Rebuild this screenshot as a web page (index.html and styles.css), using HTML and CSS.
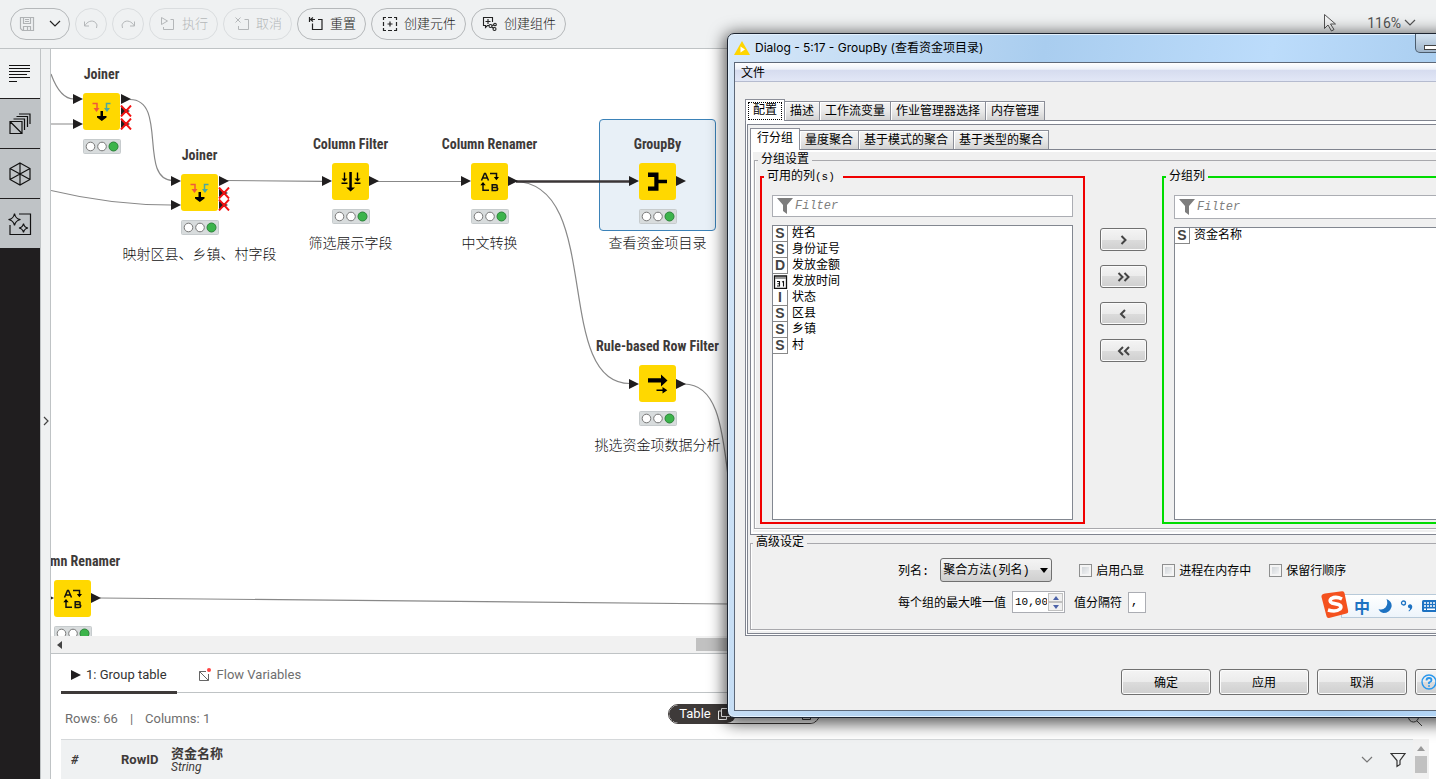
FILE: index.html
```html
<!DOCTYPE html>
<html lang="zh-CN">
<head>
<meta charset="utf-8">
<title>GroupBy</title>
<link rel="stylesheet" href="styles.css">
</head>
<body>
<svg class="defs" aria-hidden="true">
  <defs>
    <symbol id="i-joiner" viewBox="0 0 37 37">
      <path d="M9.500 10.500h4.500v6" fill="none" stroke="#ee5a3a" stroke-width="1.500"/><path d="M10.500 15h6l-3 4z" fill="#ee5a3a"/>
      <path d="M27.500 10.500h-4v6" fill="none" stroke="#4ba8a0" stroke-width="1.500"/><path d="M21 15h6l-3 4z" fill="#4ba8a0"/>
      <path d="M17.500 18h2.500v5h3.500v1.500l-4.700 3.500-4.800-3.500V23h3.500z"/>
    </symbol>
    <symbol id="i-filter" viewBox="0 0 37 37">
      <path d="M17.300 9h2.500v15.500h3.200l-4.400 4-4.400-4h3.100zM11.800 9.500h1.400v6h2.300l-3 3-3-3h2.300zM24.800 9.500h1.400v6h2.300l-3 3-3-3h2.300zM9.500 19.500h6v1.500h-6zM22.500 19.500h6v1.500h-6z"/>
    </symbol>
    <symbol id="i-rename" viewBox="0 0 37 37">
      <g fill="none" stroke="#111" stroke-width="1.500"><path d="M10.500 17.500l3-7h1l3 7M11.800 15h4.500"/><path d="M19 10.500h6.500v4"/><path d="M12 21v6.300h6"/><path d="M21.200 21.700h3.500q1.500 0 1.500 1.300t-1.500 1.500q2 0 2 1.500t-1.800 1.600h-3.700zM21.200 24.500h3.500"/></g>
      <path d="M22.800 14h5.200l-2.600 3.300zM9.300 22.300h5.400L12 19z"/>
    </symbol>
    <symbol id="i-group" viewBox="0 0 37 37"><path d="M9 9.500h10.500v7.200H28v3.600h-8.500v7.500H9v-4.200h6.300V14H9z"/></symbol>
    <symbol id="i-rowfilter" viewBox="0 0 37 37"><path d="M9 13.300h13V9.500l6.500 6-6.500 6v-3.900H9zM17.500 24.500h6V22l4.800 3.200-4.800 3.300V26h-6z"/></symbol>
    <symbol id="i-funnel" viewBox="0 0 16 16"><path d="M0 0h16l-6 7v9l-4-3V7z" fill="#7d7d7d"/></symbol>
    <symbol id="i-caret" viewBox="0 0 12 8"><path d="M1 1l5 5 5-5" fill="none" stroke="currentColor" stroke-width="1.200"/></symbol>
    <symbol id="i-lights" viewBox="0 0 38 15">
      <rect x=".5" y=".5" width="37" height="14" rx="1" fill="#d8dcdd" stroke="#c6cbcd"/>
      <circle cx="7.500" cy="7.500" r="4.300" fill="#fff" stroke="#777"/><circle cx="19" cy="7.500" r="4.300" fill="#fff" stroke="#777"/><circle cx="30.500" cy="7.500" r="4.500" fill="#3cb44b" stroke="#2b8239"/>
    </symbol>
    <symbol id="i-port" viewBox="0 0 10 10"><path d="M0 0l10 5-10 5z" fill="#201e1f"/></symbol>
    <symbol id="i-off" viewBox="0 0 12 12"><path d="M1 2l9 4-9 4z" fill="#201e1f"/><path d="M1 .5l10 11M11 .5l-10 11" stroke="#f31111" stroke-width="1.900"/></symbol>
  </defs>
</svg>

<div class="app">
  <header class="toolbar">
    <div class="pill save-group">
      <button class="bare faded" aria-label="保存"><svg width="16" height="16" viewBox="0 0 16 16" fill="none" stroke="currentColor" stroke-width="1.200"><path d="M1.500 1.500h13v13h-11l-2-2zM4.500 1.500v6h7v-6M4.500 14.500v-4h7v4M8.500 11v3M6 3.500h4M6 5.500h4"/></svg></button>
      <span class="split"></span>
      <button class="bare" aria-label="更多"><svg width="12" height="8"><use href="#i-caret"/></svg></button>
    </div>
    <button class="pill round disabled" aria-label="撤销"><svg width="16" height="12" viewBox="0 0 16 12" fill="none" stroke="currentColor"><path d="M1.500 3.500v4.500h4.500M1.700 8C4 3.500 9 1.500 12.500 4.500q2.500 2 1 5.500"/></svg></button>
    <button class="pill round disabled" aria-label="重做"><svg width="16" height="12" viewBox="0 0 16 12" fill="none" stroke="currentColor"><path d="M14.500 3.500v4.500h-4.500M14.300 8C12 3.500 7 1.500 3.500 4.500q-2.500 2-1 5.500"/></svg></button>
    <button class="pill disabled"><svg width="16" height="16" viewBox="0 0 16 16" fill="none" stroke="currentColor"><path d="M1.500 1.500l6 3.500-6 3.500zM10.500 3.500h3v10h-10v-2.500"/></svg>执行</button>
    <button class="pill disabled"><svg width="16" height="16" viewBox="0 0 16 16" fill="none" stroke="currentColor"><path d="M1.500 1.500l5 5M6.500 1.500l-5 5M10.500 3.500h4v10h-10v-3.500"/></svg>取消</button>
    <button class="pill"><svg width="16" height="16" viewBox="0 0 16 16" fill="none" stroke="currentColor" stroke-width="1.200"><path d="M1.500 1v5M7 3.500H2.500M5 1.500l-2.500 2L5 5.500M10 3.500h4v10H4.500v-6"/></svg>重置</button>
    <button class="pill"><svg width="16" height="16" viewBox="0 0 16 16" fill="none" stroke="currentColor" stroke-width="1.200"><path d="M1.500 4V1.500H4M6 1.500h4M12 1.500h2.500V4M14.500 6v4M14.500 12v2.500H12M10 14.500H6M4 14.500H1.500V12M1.500 10V6M8 5.500v5M5.500 8h5"/></svg>创建元件</button>
    <button class="pill"><svg width="16" height="16" viewBox="0 0 16 16" fill="none" stroke="currentColor" stroke-width="1.100"><path d="M7 9.500H5.500l-2 2v-2h-2v-8h9V6M6 3v5M3.500 5.500h5"/><circle cx="8.500" cy="10" r="1.500"/><circle cx="13" cy="8.500" r="1.300"/><circle cx="12.500" cy="13" r="1.500"/><path d="M10 9.500l2-.7M9.700 11l2 1.300"/></svg>创建组件</button>
    <div class="view-tools">
      <svg width="16" height="20" viewBox="0 0 16 20" fill="#f4f5f6" stroke="#555"><path d="M1.500 1.500v14l3.500-3.500 3.500 6 2.500-1.500-3.500-5.500h5z"/></svg>
      <button class="bare zoom">116%<svg width="12" height="8"><use href="#i-caret"/></svg></button>
    </div>
  </header>

  <div class="body">
    <nav class="rail">
      <button class="rail-item active" aria-label="描述"><svg width="22" height="18" viewBox="0 0 22 18" stroke="#111" stroke-width="1.100"><path d="M0 .5h21M0 3.500h21M0 6.500h21M0 9.500h18M0 12.500h21M0 16.500h8"/></svg></button>
      <button class="rail-item" aria-label="节点库"><svg width="22" height="22" viewBox="0 0 22 22" fill="none" stroke="#111" stroke-width="1.200"><path d="M1 8.500h12v12H1zM1 8.500l12 12M4.500 6h11v11M7.500 3.500h11V14M10 1h11v10"/></svg></button>
      <button class="rail-item" aria-label="空间"><svg width="22" height="24" viewBox="0 0 22 24" fill="none" stroke="#111" stroke-width="1.200"><path d="M11 1l10 5.500v11L11 23 1 17.500v-11zM11 1v22M1 6.500l20 11M21 6.500l-20 11"/></svg></button>
      <button class="rail-item" aria-label="助手"><svg width="24" height="24" viewBox="0 0 24 24" fill="none" stroke="#111" stroke-width="1.200"><path d="M11 2h11.500v20.500H2V13M6.500 1.500q1 5.500 6 6-5 1-6 6-1-5-6-6 5-.5 6-6zM15.500 11.500q.7 4 4.500 4.500-3.800.7-4.500 4.500-.8-3.800-4.500-4.500 3.700-.5 4.500-4.500z"/></svg></button>
    </nav>
    <button class="drawer" aria-label="展开"><svg width="6" height="10" viewBox="0 0 6 10" fill="none" stroke="#444" stroke-width="1.200"><path d="M1 1l4 4-4 4"/></svg></button>

    <main class="work">
      <section class="canvas">
        <div class="selection"></div>
        <svg class="wires">
          <g transform="translate(-51 -49)" fill="none" stroke="#888" stroke-width="1.200">
            <path d="M51 74q9 25 23 25M51 124h22M51 190.500q60 14.500 120 14.500M130 99.500c38 0 8 81 43 81M226 180.500l97 .8M376 181.500h86M514 181.500c90 0 38 202 116 202M684 384c32 0 38 40 44 92M100 598l630 6"/>
            <path d="M516 181.500h114" stroke="#3a3536" stroke-width="2.300"/>
          </g>
          <g transform="translate(-51 -49)">
            <use href="#i-port" x="73" y="94" width="10" height="10"/><use href="#i-port" x="73" y="119" width="10" height="10"/><use href="#i-port" x="121" y="94" width="10" height="10"/>
            <use href="#i-off" x="120" y="105" width="12" height="12"/><use href="#i-off" x="120" y="118" width="12" height="12"/>
            <use href="#i-port" x="171" y="176" width="10" height="10"/><use href="#i-port" x="171" y="200" width="10" height="10"/><use href="#i-port" x="219" y="176" width="10" height="10"/>
            <use href="#i-off" x="218" y="187" width="12" height="12"/><use href="#i-off" x="218" y="199" width="12" height="12"/>
            <use href="#i-port" x="322" y="176" width="10" height="10"/><use href="#i-port" x="369" y="176" width="10" height="10"/>
            <use href="#i-port" x="461" y="176" width="10" height="10"/><use href="#i-port" x="508" y="176" width="10" height="10"/>
            <use href="#i-port" x="629" y="176" width="10" height="10"/><use href="#i-port" x="676" y="176" width="10" height="10"/>
            <use href="#i-port" x="629" y="379" width="10" height="10"/><use href="#i-port" x="676" y="379" width="10" height="10"/>
            <use href="#i-port" x="44" y="593" width="10" height="10"/><use href="#i-port" x="91" y="593" width="10" height="10"/>
          </g>
        </svg>
        <article class="node n-joiner-a"><h3>Joiner</h3><svg class="tile"><use href="#i-joiner"/></svg><svg class="lights"><use href="#i-lights"/></svg></article>
        <article class="node n-joiner-b"><h3>Joiner</h3><svg class="tile"><use href="#i-joiner"/></svg><svg class="lights"><use href="#i-lights"/></svg><p>映射区县、乡镇、村字段</p></article>
        <article class="node n-filter"><h3>Column Filter</h3><svg class="tile"><use href="#i-filter"/></svg><svg class="lights"><use href="#i-lights"/></svg><p>筛选展示字段</p></article>
        <article class="node n-renamer-a"><h3>Column Renamer</h3><svg class="tile"><use href="#i-rename"/></svg><svg class="lights"><use href="#i-lights"/></svg><p>中文转换</p></article>
        <article class="node n-group"><h3>GroupBy</h3><svg class="tile"><use href="#i-group"/></svg><svg class="lights"><use href="#i-lights"/></svg><p>查看资金项目录</p></article>
        <article class="node n-rows"><h3>Rule-based Row Filter</h3><svg class="tile"><use href="#i-rowfilter"/></svg><svg class="lights"><use href="#i-lights"/></svg><p>挑选资金项数据分析</p></article>
        <article class="node n-renamer-b"><h3>Column Renamer</h3><svg class="tile"><use href="#i-rename"/></svg><svg class="lights"><use href="#i-lights"/></svg></article>
      </section>
      <div class="hscroll"><svg width="5" height="8" viewBox="0 0 5 8"><path d="M5 0v8L0 4z" fill="#444"/></svg><span class="hthumb"></span></div>

      <section class="output">
        <div class="out-tabs">
          <button class="out-tab active"><svg width="10" height="10"><use href="#i-port"/></svg>1: Group table</button>
          <button class="out-tab"><svg width="12" height="14" viewBox="0 0 12 14" fill="none" stroke="#666"><path d="M7 3.500H.500v9h9V6M.500 3.500l9 9"/><circle cx="10" cy="2" r="2" fill="#f44" stroke="none"/></svg>Flow Variables</button>
        </div>
        <div class="info">
          <p class="counts"><span>Rows: 66</span><span>|</span><span>Columns: 1</span></p>
          <div class="views"><button class="view on">Table<svg width="12" height="12" viewBox="0 0 12 12" fill="none" stroke="currentColor"><path d="M3.500.500h8v8h-8zM3.500 3H.500v8.500h8v-3"/></svg></button><button class="view">Statistics<svg width="12" height="12" viewBox="0 0 12 12" fill="none" stroke="currentColor"><path d="M3.500.500h8v8h-8zM3.500 3H.500v8.500h8v-3"/></svg></button></div>
          <div class="search"><svg width="16" height="16" viewBox="0 0 16 16" fill="none" stroke="#444"><circle cx="6.500" cy="6" r="5"/><path d="M10 10l5 5"/></svg></div>
        </div>
        <div class="grid-wrap">
          <table class="grid"><thead><tr><th class="c-num">#</th><th class="c-id">RowID</th><th class="c-name">资金名称<em>String</em></th><th class="c-tools"><svg class="dim" width="12" height="8"><use href="#i-caret"/></svg><svg width="16" height="16" viewBox="0 0 16 16" fill="none" stroke="#333" stroke-width="1.200"><path d="M1 1.500h14l-5 7v4l-3 2v-6z"/></svg></th></tr></thead></table>
          <div class="vscroll"><svg width="8" height="5" viewBox="0 0 8 5"><path d="M0 5l4-5 4 5z" fill="#999"/></svg><span></span></div>
        </div>
      </section>
    </main>
  </div>

  <div class="dialog" role="dialog" aria-label="GroupBy">
    <div class="title"><svg width="16" height="14" viewBox="0 0 16 14"><path d="M8 0l8 14H0z" fill="#ffd500"/><path d="M6.500 5.500v6l4.500-3z" fill="#fff"/></svg><span>Dialog - 5:17 - GroupBy (查看资金项目录)</span><button class="win-min" aria-label="最小化"><i></i></button></div>
    <div class="client">
      <div class="menubar"><button class="bare">文件</button></div>
      <div class="tabs outer"><button class="tab on"><span>配置</span></button><button class="tab">描述</button><button class="tab">工作流变量</button><button class="tab">作业管理器选择</button><button class="tab">内存管理</button></div>
      <div class="frame"><div class="frame-in">
        <div class="tabs inner"><button class="tab on">行分组</button><button class="tab">量度聚合</button><button class="tab">基于模式的聚合</button><button class="tab">基于类型的聚合</button></div>
        <div class="pane">
          <fieldset class="box settings">
            <legend>分组设置</legend>
            <div class="picker">
              <fieldset class="side red"><legend>可用的列<span class="mono">(s)</span></legend>
                <label class="filter"><svg width="16" height="16"><use href="#i-funnel"/></svg><input type="text" placeholder="Filter" aria-label="Filter"></label>
                <ul class="list">
                  <li><b>S</b>姓名</li><li><b>S</b>身份证号</li><li><b>D</b>发放金额</li>
                  <li><svg width="15" height="14" viewBox="0 0 15 14"><path d="M1.500 1h12v12.300h-12z" fill="#fff" stroke="#111" stroke-width="1.300"/><path d="M2 2h11v2H2z" fill="#999"/><path d="M4 6.500h2.500v4.500H4M4.500 8.700h2M9 7l1.500-.5V11.500" fill="none" stroke="#111" stroke-width="1.100"/></svg>发放时间</li>
                  <li><b>I</b>状态</li><li><b>S</b>区县</li><li><b>S</b>乡镇</li><li><b>S</b>村</li>
                </ul>
              </fieldset>
              <div class="moves">
                <button class="btn" aria-label="添加"><svg width="8" height="10" viewBox="0 0 8 10"><path d="M1.500 1l4 4-4 4"/></svg></button>
                <button class="btn" aria-label="全部添加"><svg width="14" height="10" viewBox="0 0 14 10"><path d="M1.500 1l4 4-4 4M7.500 1l4 4-4 4"/></svg></button>
                <button class="btn" aria-label="移除"><svg width="12" height="10" viewBox="0 0 12 10"><path d="M7 1L3 5l4 4"/></svg></button>
                <button class="btn" aria-label="全部移除"><svg width="14" height="10" viewBox="0 0 14 10"><path d="M6 1L2 5l4 4M12 1L8 5l4 4"/></svg></button>
              </div>
              <fieldset class="side green"><legend>分组列</legend>
                <label class="filter"><svg width="16" height="16"><use href="#i-funnel"/></svg><input type="text" placeholder="Filter" aria-label="Filter"></label>
                <ul class="list"><li><b>S</b>资金名称</li></ul>
              </fieldset>
            </div>
          </fieldset>
        </div>
        <fieldset class="box advanced">
          <legend>高级设定</legend>
          <div class="row">
            <label for="naming">列名:</label>
            <span class="combo"><select id="naming"><option>聚合方法(列名)</option></select><svg width="8" height="5" viewBox="0 0 8 5"><path d="M0 0h8L4 5z"/></svg></span>
            <span class="check"><input id="c1" type="checkbox"><label for="c1">启用凸显</label></span>
            <span class="check"><input id="c2" type="checkbox"><label for="c2">进程在内存中</label></span>
            <span class="check"><input id="c3" type="checkbox"><label for="c3">保留行顺序</label></span>
          </div>
          <div class="row">
            <label for="max">每个组的最大唯一值</label>
            <span class="spinner"><input id="max" type="text" value="10,000"><span class="steps"><button aria-label="增加"><svg width="6" height="4" viewBox="0 0 6 4"><path d="M0 4l3-4 3 4z"/></svg></button><button aria-label="减少"><svg width="6" height="4" viewBox="0 0 6 4"><path d="M0 0l3 4 3-4z"/></svg></button></span></span>
            <label for="sep">值分隔符</label><input class="sep" id="sep" type="text" value=",">
          </div>
        </fieldset>
      </div></div>
      <div class="actions"><button class="btn">确定</button><button class="btn">应用</button><button class="btn">取消</button><button class="btn help" aria-label="帮助"><svg width="16" height="16" viewBox="0 0 16 16" fill="none" stroke="#2a97ec" stroke-width="1.400"><circle cx="8" cy="8" r="7"/><path d="M5.500 6.500q0-2.500 2.500-2.500t2.500 2.200Q10.500 7.500 8 8.500V10M8 11.300v1.500" stroke-width="1.800"/></svg></button></div>
    </div>
  </div>

  <div class="ime">
    <svg class="ime-logo" width="28" height="28" viewBox="0 0 28 28"><path d="M4 2.500L21 .3q2-.3 2.500 1.700l3.700 18q.3 2-1.700 2.500L8 27q-2 .3-2.500-1.700L.5 6q-.5-3 3.500-3.500z" fill="#f4511e"/><path d="M21 8q-6-3-10.500-.5-3 2.500.5 4.500l6.500 1.500q4 1.500 1.500 4.500-4 3.500-12 1" fill="none" stroke="#fff" stroke-width="3.600"/></svg>
    <span>中</span>
    <svg width="14" height="14" viewBox="0 0 14 14"><path d="M8.500 0q6 2.500 5 8-2 6-8 6-3.500-.5-5-4 4 1.500 7-1.500t1-8.500z" fill="#1d72c2"/></svg>
    <svg width="14" height="12" viewBox="0 0 14 12"><circle cx="3.500" cy="3" r="2" fill="none" stroke="#1d72c2" stroke-width="1.300"/><path d="M8 5.500q2-2 3.700-.5 2 3-2.700 6.500l-.5-.7q1.500-1 1.500-2.500Q7.500 8 8 5.500z" fill="#1d72c2"/></svg>
    <svg width="18" height="12" viewBox="0 0 18 12"><rect width="18" height="12" rx="1.500" fill="#1d72c2"/><path d="M2 3h14M2 6h14" stroke="#fff" stroke-width="1.600" stroke-dasharray="2 1"/><path d="M2 9.200h2M5 9.200h8M14 9.200h2" stroke="#fff" stroke-width="1.500"/></svg>
  </div>
</div>
</body>
</html>
```
FILE: styles.css
```css
* { box-sizing: border-box; }
body { margin: 0; font: 13px/16px Roboto, "Noto Sans CJK SC", sans-serif; color: #3e3a39; overflow: hidden; }
button, input, select { font: inherit; color: inherit; margin: 0; }
h3, p, ul, fieldset { margin: 0; padding: 0; }
svg { display: block; flex: none; }
.defs { position: absolute; width: 0; height: 0; }
.app { position: relative; display: flex; flex-direction: column; height: 100vh; overflow: hidden; background: #fff; }
.bare { border: 0; background: none; padding: 0; display: flex; align-items: center; gap: 4px; }

/* Toolbar */
.toolbar { display: flex; align-items: center; gap: 5px; height: 49px; flex: none; padding: 0 20px 0 10px; background: #eff1f2; border-bottom: 1px solid #bfc3c5; }
.pill { display: flex; align-items: center; justify-content: center; gap: 6px; height: 32px; padding: 0 9px 0 10px; border: 1px solid #b5b8ba; border-radius: 16px; background: none; color: #222; font-weight: 300; white-space: nowrap; }
.pill.round { width: 32px; padding: 0; }
.pill.disabled { color: #b4b7b9; border-color: #dadddf; }
.save-group { width: 60px; gap: 7px; padding: 0 8px; }
.faded { color: #b0b3b5; }
.split { width: 1px; height: 20px; background: #bbb; }
.view-tools { display: flex; align-items: center; gap: 28px; margin-left: auto; padding-bottom: 3px; }
.zoom { font-size: 14px; color: #555; gap: 3px; }

.body { display: flex; flex: 1; min-height: 0; }
.rail { width: 40px; background: #201e1f; flex: none; }
.rail-item { display: flex; align-items: center; justify-content: center; width: 100%; height: 50px; padding: 0; border: 0; border-bottom: 1px solid #201e1f; background: #bfc3c6; }
.rail-item.active { background: #eff1f2; }
.drawer { width: 11px; flex: none; padding: 14px 0 0 2px; background: #eff1f2; border: solid #bfc3c5; border-width: 0 1px; }
.work { flex: 1; min-width: 0; display: flex; flex-direction: column; }

/* Workflow canvas */
.canvas { position: relative; flex: 1; min-height: 0; overflow: hidden; background: #fff; }
.wires { position: absolute; inset: 0; width: 100%; height: 100%; }
.selection { position: absolute; left: 548px; top: 70px; width: 117px; height: 112px; border: 1px solid #3b82b8; border-radius: 4px; background: #e8f0f7; }
.node { position: absolute; width: 159px; display: flex; flex-direction: column; align-items: center; white-space: nowrap; }
.node h3 { font: bold 14px/16px "Roboto Condensed", "Liberation Sans Narrow", Roboto, sans-serif; margin-bottom: 11px; }
.node p { font-size: 14px; line-height: 18px; font-weight: 300; color: #111; margin-top: 10px; }
.tile { width: 37px; height: 37px; border-radius: 3px; background: #ffd800; }
.lights { width: 38px; height: 15px; margin-top: 9px; }
.n-joiner-a { left: -29px; top: 17px; }
.n-joiner-b { left: 69px; top: 98px; }
.n-filter { left: 220px; top: 87px; }
.n-renamer-a { left: 359px; top: 87px; }
.n-group { left: 527px; top: 87px; }
.n-rows { left: 527px; top: 289px; }
.n-renamer-b { left: -58px; top: 504px; }
.hscroll { display: flex; align-items: center; gap: 634px; height: 18px; flex: none; padding-left: 6px; background: #f1f1f1; border-bottom: 1px solid #bfc3c5; }
.hthumb { width: 300px; height: 13px; background: #c1c1c1; }

/* Output panel */
.output { flex: none; padding: 0 7px 0 10px; }
.out-tabs { display: flex; gap: 12px; height: 39px; border-bottom: 1px solid #bfc3c5; }
.out-tab { display: flex; align-items: center; gap: 6px; height: 40px; padding: 4px 10px 0; border: 0; border-bottom: 3px solid transparent; background: none; color: #6e6e6e; }
.out-tab.active { gap: 5px; color: #333; border-color: #3e3a39; }
.info { display: flex; align-items: center; height: 46px; padding-top: 5px; }
.counts { display: flex; gap: 12px; flex: 1; padding-left: 4px; color: #6e6e6e; }
.views { display: flex; height: 20px; margin-bottom: 9px; border: 1px solid #3e3a39; border-radius: 10px; overflow: hidden; }
.view { display: flex; align-items: center; gap: 7px; border: 0; padding: 0 5px; background: #fff; }
.view.on { padding: 0 6px 0 10px; background: #3e3a39; color: #fff; border-radius: 10px; }
.search { flex: 1; display: flex; justify-content: flex-end; padding-right: 6px; }
.grid-wrap { display: flex; height: 40px; }
.grid { flex: 1; border-collapse: collapse; background: #eff1f2; border-top: 1px solid #d5d8da; }
.grid th { padding: 0; text-align: left; font-weight: bold; line-height: 15px; }
.grid em { display: block; font-size: 12px; line-height: 13px; font-weight: normal; }
.grid .c-num { width: 60px; padding-left: 10px; font-style: italic; }
.c-id { width: 50px; }
.c-tools svg { display: inline-block; vertical-align: middle; margin-right: 7px; }
.c-tools .dim { color: #777; margin-right: 17px; }
.grid .c-tools { text-align: right; }
.vscroll { width: 16px; padding: 7px 2px 0; background: #f1f1f1; }
.vscroll svg { margin: 0 auto 5px; }
.vscroll span { display: block; height: 17px; background: #c1c1c1; }

/* Dialog window */
.dialog { position: absolute; left: 727px; top: 33px; width: 793px; padding: 0 6px 6px; border: 1px solid #1c2430; border-radius: 7px; background: linear-gradient(100deg, #d8e8f8, #a9cdef 35%, #bcdcfb 60%, #a9cdef 80%, #bcdcfb); box-shadow: inset 0 0 0 1px #e4f1fd, 0 3px 16px 3px rgba(0, 0, 0, .65); font: 12px/16px "Liberation Mono", "Noto Sans CJK SC", monospace; color: #000; }
.title { position: relative; display: flex; align-items: center; gap: 5px; height: 28px; font: 12px/16px Inter, "Noto Sans CJK SC", sans-serif; }
.win-min { position: absolute; left: 681px; top: 0; width: 30px; height: 19px; padding: 9px 0 0 8px; border: 1px solid #4b5c6d; border-top: 0; border-radius: 0 0 0 5px; background: linear-gradient(#d5e4f2, #9fb5cb); }
.win-min i { display: block; width: 13px; height: 5px; border: 1px solid #444; background: #fff; }
.client { border: 1px solid #5d6878; background: #f0f0f0; }
.menubar { display: flex; height: 19px; padding: 3px 0 0 6px; background: linear-gradient(#fff, #edf1f9 35%, #d6dcef 40%, #e2e7f6); border-bottom: 1px solid #b5bbcf; }
.tabs { display: flex; align-items: flex-end; }
.tab { height: 19px; padding: 2px 5px 0; border: solid #8b8e98; border-width: 1px 1px 0; background: linear-gradient(#f4f4f4, #e9e9e9 50%, #d2d2d2); box-shadow: inset 1px 1px #fff; line-height: 17px; white-space: nowrap; margin-right: -1px; }
.tab.on { position: relative; height: 22px; padding: 0 6px; background: #fff; margin-bottom: -1px; }
.outer { padding: 17px 0 0 10px; }
.outer .tab.on { padding: 2px; }
.outer .on span { display: block; padding: 0 4px; border: 1px dotted #000; line-height: 17px; height: 18px; }
.frame { margin: 0 10px; padding: 3px 1px 1px; border: 1px solid #80848f; background: #fff; }
.frame-in { border: 1px solid #80848f; padding: 3px 2px; background: #f0f0f0; }
.pane { border: 1px solid #80848f; background: #f0f0f0; box-shadow: inset 0 0 0 2px #fff; padding: 2px 3px 5px; }
.box { min-width: 0; border: 1px solid #a8a8ac; box-shadow: inset 1px 0 #fff, 0 1px #fff; }
.box > legend { padding: 0 3px; line-height: 16px; margin-left: 2px; }
.settings { padding: 1px 5px 4px; }
.box.settings > legend { margin-left: -2px; }
.picker { display: grid; grid-template-columns: 1fr 77px 1fr; }
.side { display: flex; flex-direction: column; min-width: 0; padding: 10px 10px 2px; border: 2px solid #f00000; }
.side.green { border-color: #00dc00; }
.side legend { line-height: 16px; margin-left: -8px; padding: 0 3px; }
.red legend { padding-right: 8px; }
.mono { font-size: 11px; }
.filter { display: flex; align-items: center; gap: 2px; height: 22px; margin-bottom: 8px; padding-left: 4px; background: #fff; border: 1px solid #abadb3; }
.green .filter { height: 24px; }
.filter input { flex: 1; min-width: 0; border: 0; padding: 0; background: none; font-style: italic; outline: 0; }
.filter input::placeholder { color: #808080; opacity: 1; }
.list { list-style: none; height: 295px; border: 1px solid #828790; background: #fff; }
.green .list { height: 293px; }
.list li { display: flex; align-items: center; gap: 4px; height: 16px; line-height: 18px; }
.list b { width: 15px; height: 16px; border: solid #888; border-width: 0 1px 1px 0; text-align: center; font: bold 14px/15px "Liberation Sans", sans-serif; color: #444; }
.moves { display: flex; flex-direction: column; align-items: center; gap: 14px; padding-top: 59px; }
.btn { display: flex; align-items: center; justify-content: center; border: 1px solid #707070; border-radius: 3px; background: linear-gradient(#f4f4f4, #ebebeb 50%, #dcdcdc 50%, #cfcfcf); box-shadow: inset 0 0 0 1px #fbfbfb; padding: 0; }
.moves .btn { width: 47px; height: 23px; }
.moves path { fill: none; stroke: #444; stroke-width: 2; }
.advanced { padding: 7px 0 15px; }
.row { display: flex; align-items: center; height: 24px; margin-bottom: 8px; padding-left: 147px; white-space: nowrap; }
.row:last-child { margin-bottom: 0; }
.row label { padding-top: 3px; }
.combo { position: relative; margin: 0 27px 0 11px; }
.combo select { appearance: none; display: block; width: 112px; height: 24px; padding: 2px 2px 0; border: 1px solid #707070; border-radius: 3px; background: linear-gradient(#f4f4f4, #ebebeb 50%, #dcdcdc 50%, #cfcfcf); }
.combo svg { position: absolute; right: 4px; top: 10px; }
.check { display: flex; align-items: center; gap: 4px; margin-right: 18px; }
.check input { appearance: none; width: 13px; height: 13px; border: 1px solid #8e8f8f; background: linear-gradient(135deg, #c9ced3, #fafafa); box-shadow: inset 0 0 0 2px #f4f4f4; }
.spinner { display: flex; width: 53px; height: 22px; margin: 0 9px 0 6px; border: 1px solid #abadb3; background: #fff; }
.spinner > input { width: 34px; border: 0; padding: 0 0 0 2px; background: none; font-size: 11px; }
.steps { display: flex; flex-direction: column; padding: 1px; flex: 1; }
.steps button { flex: 1; display: flex; align-items: center; justify-content: center; padding: 0; border: 1px solid #c0c0c0; background: #f0f0f0; }
.steps path { fill: #4c62a8; }
.sep { width: 18px; height: 21px; margin-left: 6px; padding: 0 2px; border: 1px solid #abadb3; background: #fff; }
.actions { display: flex; gap: 8px; padding: 33px 0 15px 386px; font-family: "Noto Sans CJK SC", sans-serif; }
.actions .btn { width: 90px; height: 26px; }
.actions .help { width: 27px; }

/* Input method bar */
.ime { position: absolute; left: 1321px; top: 594px; height: 24px; display: flex; align-items: center; gap: 8px; padding-right: 8px; margin-left: 20px; padding-left: 12px; background: linear-gradient(#fff, #edf4fb); border: 1px solid #b8cad9; }
.ime-logo { position: absolute; left: -21px; top: -4px; }
.ime span { font: bold 16px/20px "Noto Sans CJK SC", sans-serif; color: #1d72c2; }
```
